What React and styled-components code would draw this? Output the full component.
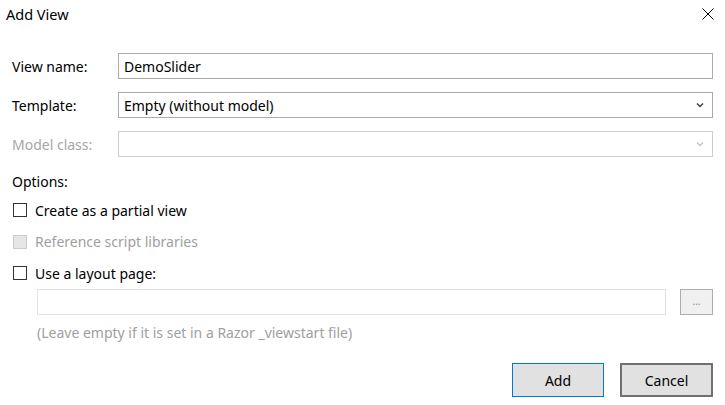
import React from 'react';
import styled, { createGlobalStyle } from 'styled-components';

const GlobalStyle = createGlobalStyle`
    html, body {
        margin: 0;
        padding: 0;
        background: #ffffff;
    }
    * {
        box-sizing: border-box;
    }
`;

function App() {
    return (
        <Dialog>
            <GlobalStyle />
            <TitleBar>
                <Title>Add View</Title>
                <CloseButton aria-label="Close">
                    <svg width="12" height="12" viewBox="0 0 12 12">
                        <path d="M0.5 0.5 L11.5 11.5 M11.5 0.5 L0.5 11.5" stroke="#000" strokeWidth="1" fill="none" />
                    </svg>
                </CloseButton>
            </TitleBar>

            <Form>
                <FieldGrid>
                    <Label>View name:</Label>
                    <TextBox>DemoSlider</TextBox>

                    <Label>Template:</Label>
                    <Select>
                        <span>Empty (without model)</span>
                        <Chevron />
                    </Select>

                    <Label disabled>Model class:</Label>
                    <Select disabled>
                        <span></span>
                        <Chevron disabled />
                    </Select>
                </FieldGrid>

                <OptionsLabel>Options:</OptionsLabel>

                <CheckList>
                    <CheckRow>
                        <Box />
                        <CheckText>Create as a partial view</CheckText>
                    </CheckRow>
                    <CheckRow>
                        <Box disabled />
                        <CheckText disabled>Reference script libraries</CheckText>
                    </CheckRow>
                    <CheckRow>
                        <Box />
                        <CheckText>Use a layout page:</CheckText>
                    </CheckRow>
                </CheckList>

                <PathRow>
                    <PathBox />
                    <BrowseButton>...</BrowseButton>
                </PathRow>
                <Hint>(Leave empty if it is set in a Razor _viewstart file)</Hint>

                <ButtonBar>
                    <DialogButton primary>Add</DialogButton>
                    <DialogButton>Cancel</DialogButton>
                </ButtonBar>
            </Form>
        </Dialog>
    );
}

function Chevron({ disabled }) {
    return (
        <svg width="8" height="6" viewBox="0 0 8 6">
            <path d="M1 1.5 L4 4.5 L7 1.5" stroke={disabled ? '#c4c4c4' : '#404040'} strokeWidth="1.5" fill="none" />
        </svg>
    );
}

const Dialog = styled.div`
    width: 725px;
    height: 405px;
    display: flex;
    flex-direction: column;
    background: #ffffff;
    font-family: "Noto Sans", "Open Sans", sans-serif;
    font-size: 14px;
    color: #000000;
`;

const TitleBar = styled.div`
    height: 28px;
    display: flex;
    align-items: center;
    justify-content: space-between;
    padding: 0 11px 0 6px;
`;

const Title = styled.div`
    font-size: 14.5px;
`;

const CloseButton = styled.div`
    width: 12px;
    height: 12px;
    display: flex;
`;

const Form = styled.div`
    flex: 1;
    display: flex;
    flex-direction: column;
    padding: 25px 12px 8px 12px;
`;

const FieldGrid = styled.div`
    display: grid;
    grid-template-columns: 106px 1fr;
    grid-auto-rows: 26px;
    row-gap: 13px;
    align-items: center;
`;

const Label = styled.div`
    color: ${(p) => (p.disabled ? '#a6a6a6' : '#000000')};
`;

const TextBox = styled.div`
    height: 26px;
    border: 1px solid #ababab;
    padding: 0 5px;
    display: flex;
    align-items: center;
`;

const Select = styled.div`
    height: 26px;
    border: 1px solid ${(p) => (p.disabled ? '#cccccc' : '#ababab')};
    padding: 0 8px 0 5px;
    display: flex;
    align-items: center;
    justify-content: space-between;
`;

const OptionsLabel = styled.div`
    margin-top: 15px;
    line-height: 20px;
`;

const CheckList = styled.div`
    margin-top: 8px;
    display: flex;
    flex-direction: column;
    gap: 11.5px;
`;

const CheckRow = styled.div`
    height: 20px;
    display: flex;
    align-items: center;
    gap: 8px;
    padding-left: 1px;
`;

const Box = styled.div`
    width: 14px;
    height: 14px;
    border: 1px solid ${(p) => (p.disabled ? '#cccccc' : '#333333')};
    background: ${(p) => (p.disabled ? '#e6e6e6' : '#ffffff')};
`;

const CheckText = styled.span`
    color: ${(p) => (p.disabled ? '#a0a0a0' : '#000000')};
`;

const PathRow = styled.div`
    margin-top: 6px;
    padding-left: 25px;
    display: flex;
    gap: 14px;
    height: 26px;
`;

const PathBox = styled.div`
    flex: 1;
    border: 1px solid #e3e3e3;
`;

const BrowseButton = styled.div`
    width: 33px;
    border: 1px solid #adadad;
    background: #f0f0f0;
    color: #8a8a8a;
    font-size: 10px;
    display: flex;
    align-items: center;
    justify-content: center;
    padding-bottom: 2px;
`;

const Hint = styled.div`
    margin-top: 8px;
    padding-left: 25px;
    line-height: 20px;
    color: #a0a0a0;
`;

const ButtonBar = styled.div`
    margin-top: 20px;
    display: flex;
    justify-content: flex-end;
    gap: 16px;
`;

const DialogButton = styled.div`
    width: ${(p) => (p.primary ? '92px' : '93px')};
    height: 34px;
    display: flex;
    align-items: center;
    justify-content: center;
    background: #e1e1e1;
    border: ${(p) => (p.primary ? '1px solid #0078d7' : '2px solid #707070')};
`;

export default App;
